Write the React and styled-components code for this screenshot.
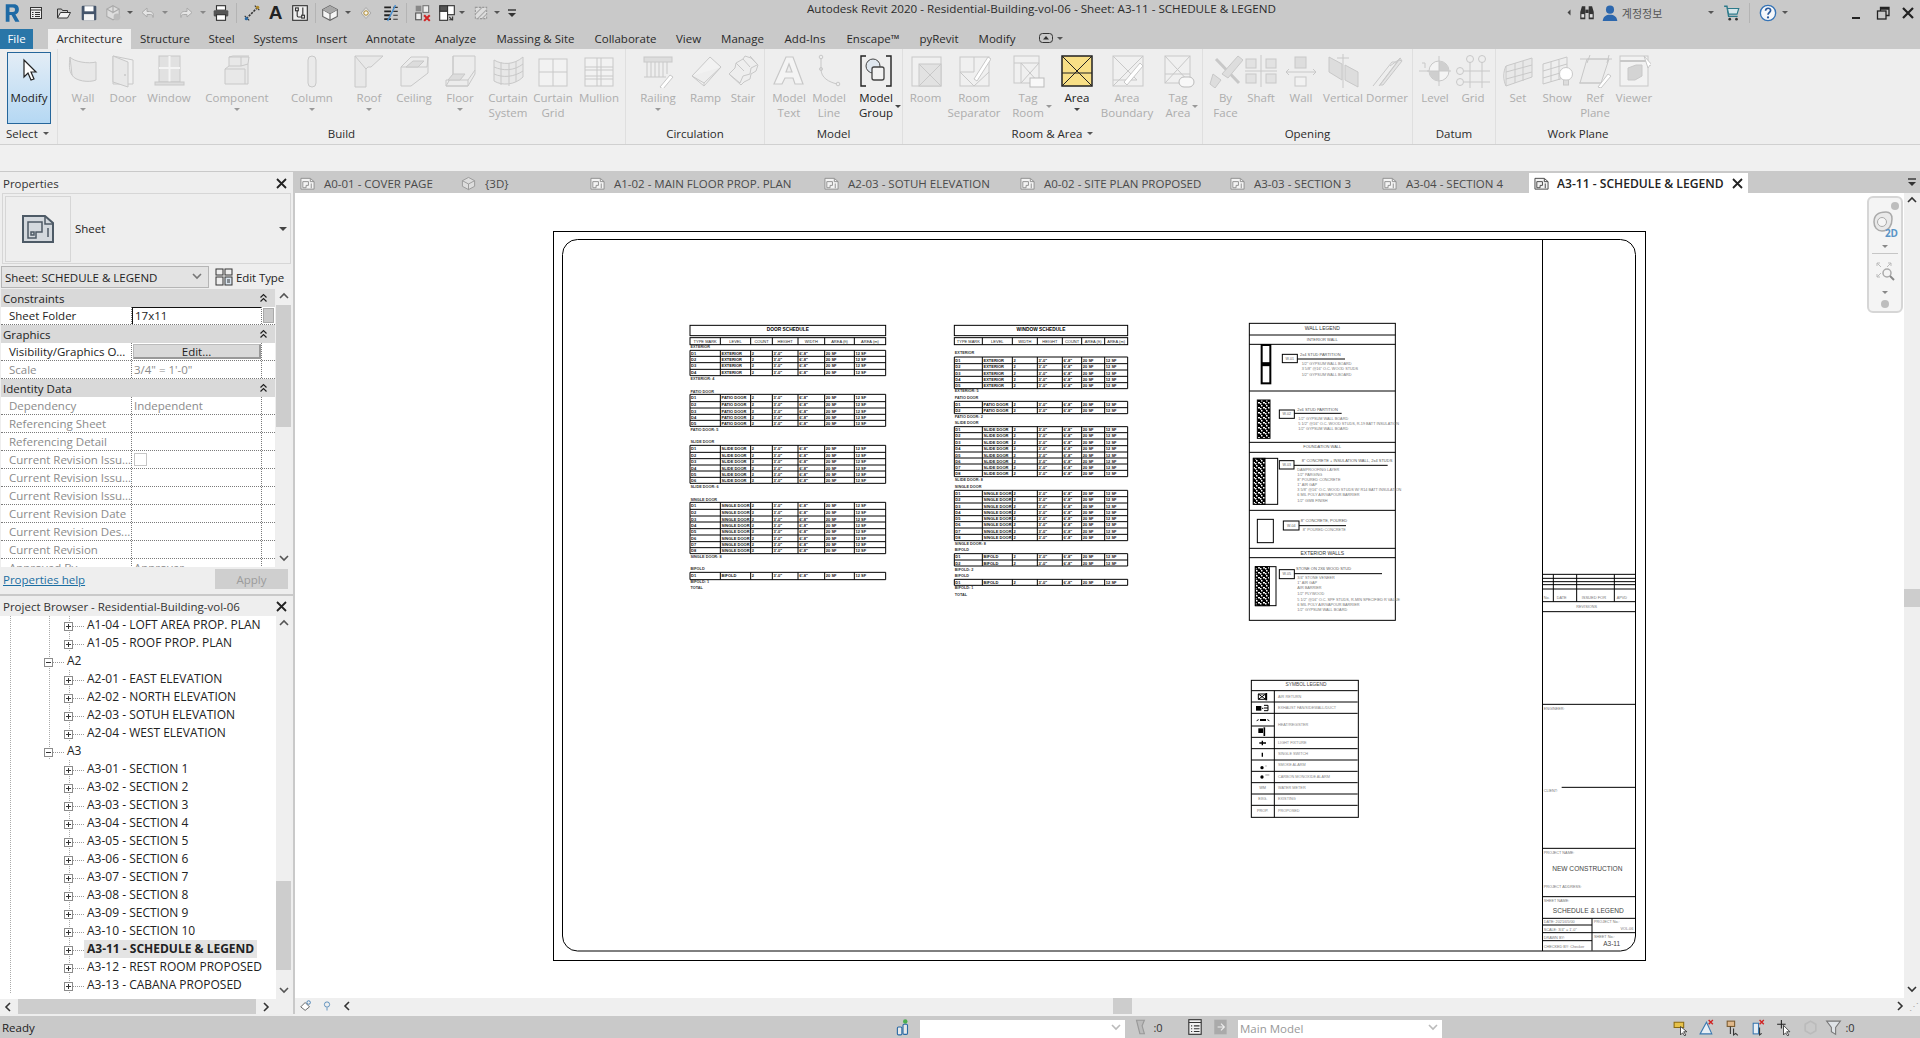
import React from 'react';
import styled, { createGlobalStyle } from 'styled-components';

const UI = `"Open Sans", "Noto Sans", "Liberation Sans", sans-serif`;
const G = '#c8c8c8';
const F = '#e8e8e8';

const Global = createGlobalStyle`
  html, body { margin: 0; padding: 0; background: #c9c9c9; overflow: hidden; }
  body { font-family: ${UI}; font-size: 11.5px; color: #222; }
  * { box-sizing: border-box; }
`;

const Page = styled.div`
  width: 1920px; height: 1038px; display: flex; flex-direction: column; background: #c9c9c9; overflow: hidden;
`;

/* ---------- generic small parts ---------- */
const Slot = styled.span`
  flex: none; width: ${p => p.$w}px; margin-left: ${p => p.$ml}px; display: flex; align-items: center; justify-content: center;
`;
const Flow = styled.div`
  display: flex; align-items: center; height: 100%;
`;
const flow = (items, start = 0) => {
  let prev = start;
  return items.map(it => {
    const w = it.w || 18;
    const ml = it.c - w / 2 - prev;
    prev = it.c + w / 2;
    return { ...it, w, ml };
  });
};
const Placed = ({ items, start }) => (
  <Flow>
    {flow(items, start).map((it, i) => <Slot key={i} $w={it.w} $ml={it.ml}>{it.n}</Slot>)}
  </Flow>
);
const Caret = styled.i`
  display: inline-block; width: 0; height: 0; border-left: 3px solid transparent; border-right: 3px solid transparent;
  border-top: 3px solid ${p => p.$c || '#555'}; flex: none;
`;
const LeftCaret = styled(Caret)`transform: rotate(90deg);`;
const BigCaret = styled(Caret)`border-width: 4px 4px 0;`;

const S = ({ s = 16, v = 16, children }) => (
  <svg width={s} height={s} viewBox={`0 0 ${v} ${v}`} fill="none">{children}</svg>
);

/* ---------- quick access icons ---------- */
const qa = {
  R: <S s={20}><path d="M3 1h6.500c3 0 4 2 4 4.200 0 2-1 3.400-2.800 4L14 15h-3.400L7.600 9.600H6V15H3z" fill="#1f6aa5" /><path d="M6 3.600v3.600h2.600c1.200 0 1.800-.7 1.800-1.800s-.6-1.800-1.800-1.800z" fill="#c9c9c9" /></S>,
  sheet: <S><rect x="2.500" y="2.500" width="11" height="11" fill="#eee" stroke="#333" /><path d="M2.500 5h11M7 7.500h5M7 9.500h5M7 11.500h5M4 7.500h1.500M4 9.500h1.500M4 11.500h1.500" stroke="#333" /></S>,
  open: <S><path d="M1.500 13V4h4l1 1.500h5V8" stroke="#333" /><path d="M1.500 13l3-5.500h10L11.500 13z" fill="#f2f2f2" stroke="#333" /></S>,
  save: <S s={18}><rect x="1.500" y="1.500" width="13" height="13" rx="1" fill="#44546a" /><rect x="4" y="2" width="8" height="4.500" fill="#fff" /><rect x="3.500" y="9" width="9" height="5.500" fill="#f2f2f2" /></S>,
  sync: <S s={18}><path d="M8 1.500l5.500 3v6.500L8 14l-5.500-3V4.500z" fill="#ddd" stroke="#aaa" /><circle cx="11.500" cy="11.500" r="3" fill="#bbb" /><path d="M8 1.500v6l5.500-3M8 7.500l-5.500-3" stroke="#aaa" /></S>,
  undo: <S><path d="M7 3L2 7.500l5 4.500V9.500h3.500c1.500 0 2.500 1 2.500 3 1-3 0-6-3.500-6H7z" fill="#e4e4e4" stroke="#aaa" /></S>,
  redo: <S><path d="M9 3l5 4.500-5 4.500V9.500H5.500c-1.500 0-2.500 1-2.500 3-1-3 0-6 3.500-6H9z" fill="#e4e4e4" stroke="#aaa" /></S>,
  print: <S s={18}><rect x="4" y="1.500" width="8" height="4" fill="#fff" stroke="#333" /><rect x="1.500" y="5.500" width="13" height="5.500" rx="1" fill="#555" /><rect x="4" y="9.500" width="8" height="5" fill="#fff" stroke="#333" /></S>,
  measure: <S s={18}><path d="M3 13L13 3" stroke="#333" strokeWidth="1.400" strokeDasharray="2 1" /><path d="M1.500 10.500l4 4M10.500 1.500l4 4" stroke="#333" /><circle cx="13" cy="3" r="1.500" fill="#b08a2a" /><circle cx="3" cy="13" r="1.500" fill="#2a6aa5" /></S>,
  tag: <S s={18}><rect x="1.500" y="1.500" width="13" height="13" fill="#eee" stroke="#333" /><rect x="4" y="3.500" width="2.500" height="2.500" stroke="#333" /><rect x="9.500" y="10" width="2.500" height="2.500" stroke="#333" /><path d="M5.500 6v4.500c0 1 .5 1 1 1h3M10.500 3v7" stroke="#333" /></S>,
  cube: <S s={18}><path d="M8 1.500L14.500 5v6L8 14.500 1.500 11V5z" fill="#f5f5f5" stroke="#666" /><path d="M1.500 5L8 8.500 14.500 5M8 8.500v6" stroke="#666" /><path d="M1.500 5L8 1.500 14.500 5 8 8.500z" fill="#a8a8a8" /></S>,
  section: <S><path d="M8 2.500L13 8l-5 5.500L3 8z" fill="#ddd" stroke="#aaa" /><circle cx="8" cy="8" r="2.200" fill="#f5f5f5" stroke="#b08a2a" /></S>,
  thin: <S s={18}><path d="M2 3h6M2 6.500h6M2 10h6M2 13.500h6" stroke="#222" strokeWidth="1.600" /><path d="M10 3h4M10 6.500h4M10 10h4M10 13.500h4" stroke="#333" /><path d="M12 1L5 15" stroke="#4a90d0" strokeWidth="1.200" /></S>,
  closeV: <S s={18}><rect x="1.500" y="1.500" width="5" height="5" fill="#888" /><rect x="1.500" y="8" width="5" height="6" fill="#eee" stroke="#555" /><rect x="8" y="1.500" width="5" height="6" fill="#eee" stroke="#777" /><path d="M9 10l5 5M14 10l-5 5" stroke="#d02424" strokeWidth="1.800" /></S>,
  swV: <S s={18}><rect x="1.500" y="1.500" width="7" height="5" fill="#555" stroke="#333" /><rect x="1.500" y="6.500" width="7" height="8" fill="#fff" stroke="#333" /><rect x="8.500" y="1.500" width="6" height="8" fill="#fff" stroke="#333" /><path d="M10 11.500l3 3M13 11v3h-3" stroke="#333" /></S>,
  hatch: <S s={18}><rect x="3" y="3" width="10" height="10" fill="#ddd" stroke="#999" strokeDasharray="2 1" /><path d="M3 9l6-6M5 13l8-8M9 13l4-4" stroke="#aaa" /></S>,
  menu: <S s={10} v={10}><path d="M1 2h8" stroke="#333" strokeWidth="1.400" /><path d="M1 5h8L5 9z" fill="#333" /></S>,
  bino: <S s={18}><path d="M2 13.500V7l1.500-5h3v11.500zM14 13.500V7l-1.500-5h-3v11.500z" fill="#333" /><rect x="6.500" y="5" width="3" height="3" fill="#333" /><rect x="3" y="9" width="2.500" height="3" fill="#ddd" /><rect x="10.500" y="9" width="2.500" height="3" fill="#ddd" /></S>,
  user: <S s={18}><circle cx="8" cy="5" r="3.600" fill="#2c67ad" /><path d="M1.500 15c.5-4 3-5.500 6.500-5.500s6 1.500 6.500 5.500z" fill="#2c67ad" /></S>,
  cart: <S s={18}><path d="M1 2h2.500l1.500 9h8" stroke="#2c7a8a" strokeWidth="1.300" /><path d="M4 4h10l-1.500 5H5z" fill="#d6e6ea" stroke="#2c7a8a" /><circle cx="6" cy="13.500" r="1.200" fill="#333" /><circle cx="12" cy="13.500" r="1.200" fill="#333" /></S>,
  help: <S s={18}><circle cx="8" cy="8" r="6.800" fill="#f5f7fa" stroke="#3573b5" strokeWidth="1.200" /><path d="M5.800 6c.2-1.500 1.200-2.200 2.300-2.200 1.300 0 2.200.8 2.200 2 0 1.700-2.300 1.800-2.300 3.700" stroke="#2a5a9c" strokeWidth="1.500" /><circle cx="8" cy="11.900" r="1" fill="#2a5a9c" /></S>,
  min: <S><path d="M3 13h8" stroke="#222" strokeWidth="2" /></S>,
  rest: <S><rect x="2.500" y="6" width="8.500" height="8" stroke="#222" strokeWidth="1.300" /><path d="M5.500 6V2.500h8.500v8H11M5.500 4h8.500" stroke="#222" strokeWidth="1.300" /></S>,
  x: <S><path d="M3 3l10 10M13 3L3 13" stroke="#222" strokeWidth="2.200" /></S>,
};
const Sep = styled.i`display: block; width: 1px; height: 20px; background: #b4b4b4;`;
const BigA = styled.span`font: 700 19px "Liberation Sans", sans-serif; color: #222;`;
const Who = styled.span`font: 400 11px "Noto Sans CJK KR", sans-serif; color: #555; white-space: nowrap;`;

const qatLeft = [
  { c: 12, n: qa.R, w: 20 }, { c: 36, n: qa.sheet }, { c: 64, n: qa.open }, { c: 89, n: qa.save },
  { c: 113, n: qa.sync }, { c: 130, n: <Caret />, w: 8 }, { c: 148, n: qa.undo }, { c: 165, n: <Caret $c="#888" />, w: 8 },
  { c: 186, n: qa.redo }, { c: 203, n: <Caret $c="#888" />, w: 8 }, { c: 221, n: qa.print }, { c: 236, n: <Sep />, w: 1 },
  { c: 252, n: qa.measure }, { c: 275.5, n: <BigA>A</BigA> }, { c: 300, n: qa.tag }, { c: 315, n: <Sep />, w: 1 },
  { c: 330, n: qa.cube }, { c: 348, n: <Caret />, w: 8 }, { c: 366, n: qa.section }, { c: 391, n: qa.thin },
  { c: 406, n: <Sep />, w: 1 }, { c: 423, n: qa.closeV }, { c: 447, n: qa.swV }, { c: 462, n: <Caret />, w: 8 },
  { c: 481, n: qa.hatch }, { c: 497, n: <Caret />, w: 8 }, { c: 512, n: qa.menu, w: 10 },
];
const qatRight = [
  { c: 1568.5, n: <LeftCaret $c="#444" />, w: 8 }, { c: 1587, n: qa.bino }, { c: 1610, n: qa.user },
  { c: 1642, n: <Who>계정정보</Who>, w: 38 }, { c: 1711, n: <Caret />, w: 8 }, { c: 1732, n: qa.cart },
  { c: 1749, n: <Sep />, w: 1 }, { c: 1768, n: qa.help }, { c: 1785, n: <Caret />, w: 8 },
  { c: 1857, n: qa.min }, { c: 1883, n: qa.rest }, { c: 1908, n: qa.x },
];

/* ---------- top bar ---------- */
const TopBar = styled.header`
  flex: none; height: 49px; background: #c9c9c9; display: flex; flex-direction: column;
`;
const TitleRow = styled.div`
  height: 29px; display: grid; grid-template-columns: 807px 753px 360px; align-items: center; padding-bottom: 4px;
`;
const Title = styled.div`
  font-size: 11.650px; line-height: 16px; color: #2b2b2b; white-space: nowrap; align-self: start; margin-top: 1px;
`;
const TabsRow = styled.nav`
  height: 20px; display: flex; align-items: stretch;
`;
const FileTab = styled.div`
  width: 33px; background: #2a76a8; color: #fff; display: flex; align-items: center; justify-content: center; margin-right: 15px; padding-bottom: 2px;
`;
const RibbonTab = styled.div`
  display: flex; align-items: center; justify-content: center; flex: none; white-space: nowrap; width: ${p => p.$w}px; padding-bottom: 2px;
  background: ${p => p.$on ? '#efefef' : 'transparent'}; color: #2a2a2a;
`;
const RibbonMenuCaret = styled(Caret)`margin-left: 4px;`;

/* ---------- ribbon ---------- */
const Ribbon = styled.section`
  flex: none; height: 96px; background: #eeeeee; border-bottom: 1px solid #d0d0d0; display: flex;
`;
const Panel = styled.div`
  flex: none; width: ${p => p.$w}px; border-right: 1px solid ${p => p.$last ? 'transparent' : '#dfdfdf'}; display: flex; flex-direction: column;
`;
const Tools = styled.div`
  height: 76px; display: flex; padding-left: ${p => p.$pad || 0}px;
`;
const PanelLabel = styled.div`
  height: 16px; display: flex; gap: 5px; align-items: center; justify-content: ${p => p.$left ? 'flex-start' : 'center'};
  padding-left: ${p => p.$left ? 6 : 0}px; color: #2b2b2b;
`;
const Tool = styled.div`
  flex: none; width: ${p => p.$w}px; display: flex; flex-direction: column; align-items: center; padding-top: 5px;
  color: ${p => p.$on ? '#222' : '#adadad'}; position: relative;
`;
const ToolIcon = styled.div`height: 34px; display: flex; align-items: center; justify-content: center;`;
const ToolLabel = styled.div`
  margin-top: 2px; line-height: 15px; text-align: center; display: flex; flex-direction: column; align-items: center; white-space: nowrap;
`;
const ModifyLabel = styled(ToolLabel)`margin-top: 3px;`;
const ToolCaret = styled.div`margin-top: 3px; height: 6px; display: flex; justify-content: center;`;
const SideCaret = styled.span`position: absolute; display: flex; right: ${p => p.$r}px; top: 56px;`;
const ModifyBtn = styled.div`
  margin: 3px 0 0 7px; width: 44px; height: 72px; border: 1px solid #25669b; display: flex; flex-direction: column; align-items: center;
  background: linear-gradient(#e3edf6, #b5d8f3); color: #222;
`;

const ic = (kids, v = 34) => <svg width="34" height="34" viewBox={`0 0 ${v} ${v}`} fill="none">{kids}</svg>;
const ti = {
  wall: ic(<><path d="M4 3c4 5 19 7 26 5v18c-7 3-21 1-24-5z" fill={F} stroke={G} /><path d="M4 3c-1 8-1 14 2 18" stroke={G} /></>),
  door: ic(<><path d="M7 2l20 4v24H7z" fill="#f0f0f0" stroke={G} /><path d="M7 2l15 6v25L7 28z" fill={F} stroke={G} /><circle cx="19" cy="21" r="1" fill={G} /></>),
  window: ic(<><rect x="7" y="2" width="21" height="26" fill="#e1e1e1" stroke={G} /><path d="M17.500 2v26M7 14h21" stroke="#f4f4f4" strokeWidth="2" /><rect x="3" y="28" width="29" height="3" fill="#ddd" stroke={G} /></>),
  comp: ic(<><path d="M5 15l4-3V3h20l-1 7v20H5z" fill={F} stroke={G} /><path d="M9 3l4-1h16M9 12h12V3M21 12l7-2M5 15h20v15" stroke={G} /></>),
  column: ic(<rect x="13" y="2" width="8" height="31" rx="4" fill="#eaeaea" stroke={G} />),
  roof: ic(<path d="M3 2h28L19 13h-3L14 15v18H3zM3 2l11 13" fill={F} stroke={G} />),
  ceiling: ic(<><path d="M4 13L14 3h17v16L14 32H4z" fill="#ececec" stroke={G} /><path d="M4 13h26l1-10M14 3L4 13" stroke={G} /><path d="M9 13l7-6h11l-6 6z" fill="#dcdcdc" stroke={G} /></>),
  floor: ic(<><path d="M10 2h22v18l-7 12H3l7-12z" fill="#ececec" stroke={G} /><path d="M3 26h22v6H3zM25 26l7-10M10 20V2" stroke={G} /><path d="M10 20h12l-5 6H5z" fill="#dcdcdc" stroke={G} /></>),
  csys: ic(<><path d="M3 6c8 5 20 5 29-3v20c-8 8-21 9-29 4z" fill={F} stroke={G} /><path d="M3 13c9 4 20 4 29-3M3 20c9 4 20 3 29-3M10 8v23M18 9v23M25 7v21" stroke={G} /></>),
  cgrid: ic(<><rect x="3" y="5" width="28" height="27" fill="#f2f2f2" stroke={G} /><path d="M3 18h28M17 5v27" stroke={G} /></>),
  mullion: ic(<><rect x="3" y="4" width="28" height="28" fill="#f2f2f2" stroke={G} /><path d="M15 4v28M19 4v28M3 13h28M3 16h28M3 25h28M3 22h28" stroke={G} /></>),
  railing: ic(<><rect x="3" y="3" width="28" height="5" fill="#ddd" stroke={G} /><path d="M6 8v15M10 8v15M14 8v15M18 8v15M22 8v15M26 8v12M3 23h22" stroke={G} /><path d="M19 33l10-12 3 2-10 12z" fill="#fff" stroke={G} /></>),
  ramp: ic(<path d="M3 22L21 3l11 10-17 19zM3 22l12 7 17-16M15 29v3" fill="#f2f2f2" stroke={G} />),
  stair: ic(<path d="M3 20l6-6 1-5 7-4 2-3 6 2 7 7-2 6-5 3-1 5-6 3-3 3-12-11zM10 9l8 8M17 5l7 8M24 2l7 8M3 20l11 9 3-7 7-2 1-6 6-3" fill="#eee" stroke={G} />),
  mtext: ic(<path d="M2 30L14 3h7l10 27h-8l-2-6h-8l-3 6zM14 18h6l-3-8z" fill="#f4f4f4" stroke={G} strokeWidth="1.200" />),
  mline: ic(<><path d="M9 4v11c0 9 8 13 16 15" stroke={G} /><circle cx="9" cy="3" r="1.800" stroke={G} /><circle cx="26" cy="30" r="1.800" stroke={G} /><circle cx="9" cy="15" r="1.500" stroke={G} /></>),
  mgroup: ic(<><path d="M7 2H2v30h5M27 2h5v30h-5" stroke="#222" strokeWidth="1.400" /><circle cx="14" cy="12" r="7" fill="#dfe7ef" stroke="#444" /><rect x="13" y="13" width="12" height="13" rx="2" fill="#f2f2f2" stroke="#444" strokeWidth="1.300" /></>),
  room: ic(<><rect x="3" y="3" width="29" height="29" fill="#f0f0f0" stroke={G} /><rect x="10" y="10" width="22" height="22" fill="#e2e2e2" stroke={G} /><path d="M10 10l22 22M32 10L10 32" stroke={G} /></>),
  rsep: ic(<><rect x="3" y="3" width="29" height="29" fill="#f0f0f0" stroke={G} /><path d="M3 18h14V3M3 18l14 14M17 32l15-14" stroke={G} /><path d="M17 25L31 3l3 2-14 22z" fill="#fff" stroke={G} /></>),
  troom: ic(<><rect x="3" y="2" width="25" height="27" fill="#f0f0f0" stroke={G} /><path d="M10 9v20M3 9h25M10 9l18 20M28 9L10 29" stroke={G} /><rect x="19" y="24" width="14" height="9" fill="#f8f8f8" stroke="#bbb" /></>),
  area: ic(<><rect x="2" y="2" width="30" height="30" fill="#f8df86" stroke="#222" strokeWidth="1.500" /><path d="M2 2l30 30M32 2L2 32M2 19h30" stroke="#222" /></>),
  aboundary: ic(<><rect x="3" y="2" width="30" height="30" fill="#f0f0f0" stroke={G} /><path d="M3 2l24 24M33 2L3 32M3 26h24" stroke={G} /><path d="M14 28L30 9l3 3-16 19z" fill="#fff" stroke={G} /></>),
  tarea: ic(<><rect x="4" y="2" width="25" height="27" fill="#f0f0f0" stroke={G} /><path d="M4 2l25 27M29 2L4 29M4 20h25" stroke={G} /><rect x="18" y="23" width="15" height="10" rx="5" fill="#f8f8f8" stroke="#bbb" /></>),
  byface: ic(<><path d="M4 20l8 6-6 8-5-4z" fill="#ddd" stroke={G} /><path d="M7 5L30 29" stroke={G} strokeWidth="3" /><path d="M29 2l5 4-15 18-6-4z" fill="#ddd" stroke={G} /></>),
  shaft: ic(<><path d="M17 1v32M1 17h32" stroke={G} /><rect x="2" y="5" width="10" height="9" fill="#e2e2e2" stroke={G} /><rect x="22" y="5" width="10" height="9" fill="#e2e2e2" stroke={G} /><rect x="2" y="20" width="10" height="9" fill="#e2e2e2" stroke={G} /><rect x="22" y="20" width="10" height="9" fill="#e2e2e2" stroke={G} /></>),
  owall: ic(<><rect x="11" y="3" width="11" height="11" fill="#ddd" stroke={G} /><path d="M2 18h30M5 15l-3 3 3 3M29 15l3 3-3 3" stroke={G} /><rect x="11" y="23" width="11" height="9" fill="#f2f2f2" stroke={G} /></>),
  vert: ic(<><path d="M3 3l13 7v16L3 18zM19 11l13 7v15l-13-7z" fill="#ddd" stroke={G} /><path d="M17 0v34M11 4h12" stroke={G} /></>),
  dormer: ic(<><path d="M3 32L22 8h9M9 32L30 4l2 3M20 12L31 4" stroke={G} /><path d="M10 31L29 6l3 1-19 24z" fill="#e4e4e4" stroke={G} /></>),
  level: ic(<><path d="M1 17h10M4 9h3v5" stroke={G} /><circle cx="21" cy="17" r="10" fill="#f4f4f4" stroke={G} /><path d="M21 7a10 10 0 0 1 10 10H21zM21 27a10 10 0 0 1-10-10h10z" fill="#cfcfcf" /><path d="M9 17h24M21 2v30" stroke={G} /></>),
  grid: ic(<><path d="M14 8v26M26 8v26M8 17h26M8 28h26" stroke={G} /><circle cx="14" cy="5" r="3.500" stroke={G} /><circle cx="26" cy="5" r="3.500" stroke={G} /><circle cx="4" cy="17" r="3.500" stroke={G} /><circle cx="4" cy="28" r="3.500" stroke={G} /></>),
  set: ic(<><path d="M5 12l26-8v19L5 32z" fill={F} stroke={G} /><path d="M5 12c-3 6-3 14 0 20M14 9v20M22 7v20M5 18l26-7M5 25l26-7" stroke={G} /></>),
  show: ic(<><path d="M3 10l24-7v20l-24 7z" fill="#eee" stroke={G} /><path d="M11 8v20M19 6v20M3 17l24-7M3 24l24-7" stroke={G} /><circle cx="26" cy="20" r="6.500" fill="#fff" stroke={G} /><rect x="23.500" y="26" width="5" height="5" fill="#ddd" stroke={G} /></>),
  ref: ic(<><path d="M9 5h22l-8 24H2z" fill="#ececec" stroke={G} /><path d="M2 5h32M1 29h26M12 1l-3 8M31 1l-2 8" stroke={G} /><path d="M20 33l10-13 3 2-10 12z" fill="#fff" stroke={G} /></>),
  viewer: ic(<><rect x="3" y="2" width="28" height="30" fill="#f2f2f2" stroke={G} /><path d="M3 7h28" stroke={G} strokeWidth="2" /><path d="M11 14l8-3h6v11l-7 4h-7z" fill="#d4d4d4" stroke={G} /><path d="M27 2l4 12 2-3 3 1z" fill="#fff" stroke={G} /></>),
};
const cursorIcon = ic(<path d="M12 7v17l4-4 3 7 3-1-3-7h5z" fill="#fff" stroke="#222" strokeWidth="1.200" />);

const panels = [
  { w: 568, name: 'Build', pad: 5, tools: [
    ['Wall', 40, ti.wall, 1], ['Door', 40, ti.door], ['Window', 52, ti.window], ['Component', 84, ti.comp, 1], ['Column', 66, ti.column, 1],
    ['Roof', 48, ti.roof, 1], ['Ceiling', 42, ti.ceiling], ['Floor', 50, ti.floor, 1], ['Curtain|System', 46, ti.csys], ['Curtain|Grid', 44, ti.cgrid], ['Mullion', 48, ti.mullion],
  ] },
  { w: 139, name: 'Circulation', pad: 7, tools: [['Railing', 50, ti.railing, 1], ['Ramp', 45, ti.ramp], ['Stair', 30, ti.stair]] },
  { w: 138, name: 'Model', pad: 4, tools: [['Model|Text', 40, ti.mtext], ['Model|Line', 40, ti.mline], ['Model|Group', 54, ti.mgroup, 0, true, 2]] },
  { w: 300, name: 'Room & Area', caret: true, pad: 2, tools: [
    ['Room', 41, ti.room], ['Room|Separator', 56, ti.rsep], ['Tag|Room', 52, ti.troom, 0, false, 2], ['Area', 46, ti.area, 1, true],
    ['Area|Boundary', 54, ti.aboundary], ['Tag|Area', 48, ti.tarea, 0, false, 4],
  ] },
  { w: 210, name: 'Opening', pad: 4, tools: [['By|Face', 37, ti.byface], ['Shaft', 34, ti.shaft], ['Wall', 46, ti.owall], ['Vertical', 38, ti.vert], ['Dormer', 50, ti.dormer]] },
  { w: 83, name: 'Datum', pad: 2, tools: [['Level', 40, ti.level], ['Grid', 36, ti.grid]] },
  { w: 165, name: 'Work Plane', pad: 2, last: true, tools: [['Set', 40, ti.set], ['Show', 38, ti.show], ['Ref|Plane', 38, ti.ref], ['Viewer', 40, ti.viewer]] },
];

const RibbonBar = () => (
  <Ribbon>
    <Panel $w={58}>
      <Tools>
        <ModifyBtn>
          <ToolIcon>{cursorIcon}</ToolIcon>
          <ModifyLabel>Modify</ModifyLabel>
        </ModifyBtn>
      </Tools>
      <PanelLabel $left>Select <Caret /></PanelLabel>
    </Panel>
    {panels.map(p => (
      <Panel key={p.name} $w={p.w} $last={p.last}>
        <Tools $pad={p.pad}>
          {p.tools.map(([label, w, icon, caret, on, side]) => (
            <Tool key={label} $w={w} $on={on}>
              <ToolIcon>{icon}</ToolIcon>
              <ToolLabel>{label.split('|').map(l => <span key={l}>{l}</span>)}</ToolLabel>
              {caret ? <ToolCaret><Caret $c={on ? '#444' : '#999'} /></ToolCaret> : null}
              {side ? <SideCaret $r={side}><Caret $c={on ? '#444' : '#999'} /></SideCaret> : null}
            </Tool>
          ))}
        </Tools>
        <PanelLabel>{p.name}{p.caret ? <Caret /> : null}</PanelLabel>
      </Panel>
    ))}
  </Ribbon>
);

const OptionsBar = styled.div`flex: none; height: 26px; background: #f0f0f0;`;

/* ---------- main area ---------- */
const Main = styled.main`flex: 1; min-height: 0; display: flex; padding-bottom: 2px; background: #f0f0f0;`;
const Left = styled.aside`
  flex: none; width: 295px; background: #c9c9c9; display: flex; flex-direction: column; gap: 2px; padding: 1px 2px 0 0;
`;
const Dock = styled.section`
  background: #eeeeee; display: flex; flex-direction: column; height: ${p => p.$h}px; flex: none;
`;
const DockHead = styled.div`
  flex: none; height: ${p => p.$h}px; padding: ${p => p.$top || 0}px 6px 0 3px; display: flex; align-items: center; justify-content: space-between; color: #333; white-space: nowrap;
`;
const CloseX = () => <svg width="11" height="11" viewBox="0 0 11 11"><path d="M1 1l9 9M10 1l-9 9" stroke="#222" strokeWidth="1.800" /></svg>;

const TypeBox = styled.div`
  flex: none; height: 71px; margin: 0 2px 0 2px; border: 1px solid #d6d6d6; display: flex; align-items: center; padding-right: 3px;
`;
const TypeThumb = styled.div`
  width: 66px; height: 66px; margin-left: 2px; border: 1px solid #d6d6d6; display: flex; align-items: center; justify-content: center;
`;
const TypeName = styled.div`flex: 1; padding-left: 4px;`;
const SelectRow = styled.div`
  flex: none; height: 25px; display: flex; align-items: center; padding: 1px 0 0 1px;
`;
const Select = styled.div`
  width: 208px; height: 22px; background: #e3e3e3; border: 1px solid #b5b5b5; display: flex; align-items: center; justify-content: space-between;
  padding: 0 6px 0 3px; white-space: nowrap;
`;
const EditType = styled.div`display: flex; align-items: center; gap: 3px; margin-left: 6px; white-space: nowrap; letter-spacing: -.1px;`;
const PropsBody = styled.div`flex: none; height: 278px; display: flex; overflow: hidden;`;
const PropTable = styled.div`flex: none; width: 274px; margin-left: 1px; height: 100%; overflow: hidden; background: #fff;`;
const GroupRow = styled.div`
  height: 18px; background: #d9d9d9; display: flex; align-items: center; justify-content: space-between; padding: 0 7px 0 2px; color: #222;
`;
const DoubleUp = () => <svg width="9" height="10" viewBox="0 0 9 10" fill="none"><path d="M1.500 4.500l3-3 3 3M1.500 8.500l3-3 3 3" stroke="#222" strokeWidth="1.200" /></svg>;
const PropRow = styled.div`
  height: 18px; display: grid; grid-template-columns: 131px 130px 1fr; border-bottom: 1px dotted #7a7a7a; background: #fff;
  color: ${p => p.$dim ? '#8b8b8b' : '#222'};
`;
const PropKey = styled.div`
  padding-left: 8px; border-right: 1px dotted #7a7a7a; white-space: nowrap; overflow: hidden; line-height: 17px;
`;
const PropVal = styled.div`
  border-right: 1px dotted #7a7a7a; padding-left: 2px; white-space: nowrap; line-height: 17px; overflow: hidden;
`;
const ValueInput = styled.div`
  width: 130px; height: 18px; margin-left: -2px; border: 1px solid #111; border-right-width: 1.500px; background: #fff; color: #222; padding-left: 2px; line-height: 16px; white-space: nowrap;
`;
const EditBtn = styled.div`
  margin: 1px 0 0 -1px; height: 15px; width: 128px; background: #d9d9d9; border: 1px solid #bbb; border-bottom: 2px solid #999; border-right: 2px solid #999;
  text-align: center; line-height: 13px; color: #222;
`;
const Check = styled.i`display: block; width: 13px; height: 13px; border: 1px solid #c6c6c6; margin-top: 2px;`;
const Gutter = styled.div`margin: 1px; background: #c9c9c9; border: 1px solid #aaa;`;
const VBar = styled.div`
  flex: none; width: ${p => p.$w || 15}px; margin-left: ${p => p.$ml ?? 1}px; display: flex; flex-direction: column; align-items: center; background: ${p => p.$bg || '#efefef'};
`;
const ArrowBtn = styled.div`flex: none; height: 16px; display: flex; align-items: center; justify-content: center; width: 100%;`;
const Track = styled.div`flex: 1; width: 100%; padding-top: ${p => p.$top}px;`;
const Thumb = styled.div`width: 100%; height: ${p => p.$h}px; background: #cdcdcd;`;
const Chev = ({ d = 'up', c = '#555' }) => {
  const paths = { up: 'M1 6l4-4 4 4', down: 'M1 2l4 4 4-4', left: 'M6 1L2 5l4 4', right: 'M3 1l4 4-4 4' };
  return <svg width="10" height="10" viewBox="0 0 10 10" fill="none"><path d={paths[d]} stroke={c} strokeWidth="1.600" /></svg>;
};
const HelpRow = styled.div`
  flex: 1; display: flex; align-items: center; justify-content: space-between; padding: 0 5px 3px 3px;
`;
const HelpLink = styled.a`color: #1b6ea3; text-decoration: underline;`;
const ApplyBtn = styled.div`
  width: 73px; height: 20px; background: #cfcfcf; color: #9b9b9b; display: flex; align-items: center; justify-content: center;
`;

const propRows = [
  { g: 'Constraints' },
  { k: 'Sheet Folder', input: '17x11' },
  { g: 'Graphics' },
  { k: 'Visibility/Graphics O...', edit: true },
  { k: 'Scale', v: `3/4" = 1'-0"`, dim: true },
  { g: 'Identity Data' },
  { k: 'Dependency', v: 'Independent', dim: true },
  { k: 'Referencing Sheet', dim: true },
  { k: 'Referencing Detail', dim: true },
  { k: 'Current Revision Issu...', dim: true, check: true },
  { k: 'Current Revision Issu...', dim: true },
  { k: 'Current Revision Issu...', dim: true },
  { k: 'Current Revision Date', dim: true },
  { k: 'Current Revision Des...', dim: true },
  { k: 'Current Revision', dim: true },
  { k: 'Approved By', v: 'Approver', dim: true },
];

const SheetGlyph = ({ s = 15, c = '#8e8e8e', w = 1 }) => (
  <svg width={s} height={s} viewBox="0 0 16 16" fill="none">
    <path d="M1 2.500h10l4 3.500v8H1z" fill="#f3f3f3" stroke={c} strokeWidth={w} />
    <path d="M3 6h6v4H6.500v2.500H3zM11 3v3h4M12 8v5" stroke={c} strokeWidth={w} />
  </svg>
);

const Properties = () => (
  <Dock $h={422}>
    <DockHead $h={21} $top={1}>Properties<CloseX /></DockHead>
    <TypeBox>
      <TypeThumb>
        <svg width="34" height="30" viewBox="0 0 34 30" fill="none">
          <path d="M2 2h22l8 7v19H2z" fill="#d4d9de" stroke="#4d5a66" strokeWidth="2" />
          <path d="M7 8h14v10h-6v6H7zM24 3v7h8M27 14v9M10 18h3v3h-3z" stroke="#4d5a66" strokeWidth="1.500" />
        </svg>
      </TypeThumb>
      <TypeName>Sheet</TypeName>
      <BigCaret $c="#444" />
    </TypeBox>
    <SelectRow>
      <Select>Sheet: SCHEDULE &amp; LEGEND<Chev d="down" c="#777" /></Select>
      <EditType>
        <svg width="18" height="18" viewBox="0 0 18 18" fill="none">
          <rect x="1" y="1" width="7" height="6" stroke="#333" /><rect x="1" y="9" width="7" height="8" stroke="#333" />
          <rect x="10" y="1" width="7" height="6" stroke="#333" /><rect x="10" y="9" width="7" height="8" fill="#d9e4ee" stroke="#333" />
          <path d="M12 12h3M12 14h3" stroke="#333" />
        </svg>
        Edit Type
      </EditType>
    </SelectRow>
    <PropsBody>
      <PropTable>
        {propRows.map((r, i) => r.g ? (
          <GroupRow key={i}>{r.g}<DoubleUp /></GroupRow>
        ) : (
          <PropRow key={i} $dim={r.dim}>
            <PropKey>{r.k}</PropKey>
            <PropVal>
              {r.input ? <ValueInput>{r.input}</ValueInput> : null}
              {r.edit ? <EditBtn>Edit...</EditBtn> : null}
              {r.check ? <Check /> : null}
              {r.v}
            </PropVal>
            {r.input ? <Gutter /> : <span />}
          </PropRow>
        ))}
      </PropTable>
      <VBar>
        <ArrowBtn><Chev /></ArrowBtn>
        <Track $top={0}><Thumb $h={122} /></Track>
        <ArrowBtn><Chev d="down" /></ArrowBtn>
      </VBar>
    </PropsBody>
    <HelpRow>
      <HelpLink>Properties help</HelpLink>
      <ApplyBtn>Apply</ApplyBtn>
    </HelpRow>
  </Dock>
);

/* ---------- project browser ---------- */
const TreeWrap = styled.div`flex: none; height: 383px; display: flex;`;
const Tree = styled.div`flex: none; width: 276px; background: #fff; overflow: hidden; font-size: 12px;`;
const dotted = x => `linear-gradient(#aaa 50%, transparent 50%) ${x}px 0 / 1px 2px repeat-y`;
const Row = styled.div`
  height: 18px; display: flex; align-items: center; padding-left: ${p => p.$x}px; white-space: nowrap;
  background: ${p => p.$guides.map(dotted).join(',')};
`;
const Expander = styled.span`
  flex: none; width: 9px; height: 9px; border: 1px solid #8c8c8c; background: #fff; position: relative; margin-top: 2px;
  &::before { content: ''; position: absolute; left: 1px; right: 1px; top: 3px; height: 1px; background: #333; }
  &::after { content: ${p => p.$plus ? '""' : 'none'}; position: absolute; top: 1px; bottom: 1px; left: 3px; width: 1px; background: #333; }
`;
const Leader = styled.span`flex: none; width: ${p => p.$w}px; border-top: 1px dotted #999; margin-top: 2px;`;
const RowText = styled.span`
  padding: 0 3px; line-height: 18px; background: ${p => p.$on ? '#e4e4e4' : '#fff'}; font-weight: ${p => p.$on ? 700 : 400}; color: #222;
`;
const HBar = styled.div`
  flex: none; height: 15px; display: flex; align-items: center; background: #efefef;
`;
const HArrow = styled.div`flex: none; width: ${p => p.$w}px; display: flex; justify-content: center;`;
const HThumb = styled.div`flex: none; width: 238px; height: 15px; background: #cdcdcd;`;

const sheetRows = [
  ['A1-04 - LOFT AREA PROP. PLAN'], ['A1-05 - ROOF PROP. PLAN'], ['A2', 1],
  ['A2-01 - EAST ELEVATION'], ['A2-02 - NORTH ELEVATION'], ['A2-03 - SOTUH ELEVATION'], ['A2-04 - WEST ELEVATION'], ['A3', 1],
  ...['1', '2', '3', '4', '5', '6', '7', '8', '9', '10'].map((n, i) => [`A3-${String(i + 1).padStart(2, '0')} - SECTION ${n}`]),
  ['A3-11 - SCHEDULE & LEGEND', 0, 1], ['A3-12 - REST ROOM PROPOSED'], ['A3-13 - CABANA PROPOSED'],
];

const Browser = () => {
  let seenA3 = false;
  return (
    <Dock $h={420}>
      <DockHead $h={20}>Project Browser - Residential-Building-vol-06<CloseX /></DockHead>
      <TreeWrap>
        <Tree>
          {sheetRows.map(([t, group, on]) => {
            const guides = [10];
            if (!seenA3) guides.push(49);
            if (t === 'A3') seenA3 = true;
            if (!group) guides.push(69);
            return group ? (
              <Row key={t} $x={44} $guides={guides}><Expander /><Leader $w={11} /><RowText>{t}</RowText></Row>
            ) : (
              <Row key={t} $x={64} $guides={guides}><Expander $plus /><Leader $w={11} /><RowText $on={on}>{t}</RowText></Row>
            );
          })}
        </Tree>
        <VBar $ml={0}>
          <ArrowBtn><Chev /></ArrowBtn>
          <Track $top={249}><Thumb $h={89} /></Track>
          <ArrowBtn><Chev d="down" /></ArrowBtn>
        </VBar>
      </TreeWrap>
      <HBar>
        <HArrow $w={18}><Chev d="left" c="#333" /></HArrow>
        <HThumb />
        <HArrow $w={20}><Chev d="right" c="#333" /></HArrow>
      </HBar>
    </Dock>
  );
};

/* ---------- view side ---------- */
const ViewSide = styled.div`flex: 1; min-width: 0; display: flex; flex-direction: column;`;
const TabStrip = styled.div`
  flex: none; height: 22px; background: #c9c9c9; display: flex; align-items: flex-end; padding-left: 1px; position: relative;
`;
const ViewTab = styled.div`
  flex: none; width: ${p => p.$w}px; height: 20px; padding-left: ${p => p.$on ? 5 : 4}px; display: flex; align-items: center; gap: ${p => p.$on ? 8 : 9}px;
  background: ${p => p.$on ? '#fff' : 'transparent'}; font-weight: ${p => p.$on ? 600 : 400}; color: ${p => p.$on ? '#222' : '#4a4a4a'}; white-space: nowrap;
  font-size: ${p => p.$on ? '12.100px' : '11.500px'};
`;
const TabClose = styled.span`margin-left: 0; display: flex;`;
const TabMenu = styled.span`margin-left: auto; margin-right: 3px; align-self: center; display: flex;`;
const CubeTab = () => (
  <svg width="15" height="15" viewBox="0 0 16 16" fill="none">
    <path d="M8 1.500L14.500 5v6L8 14.500 1.500 11V5z" fill="#ddd" stroke="#999" /><path d="M1.500 5L8 8.500 14.500 5M8 8.500v6" stroke="#999" />
  </svg>
);
const viewTabs = [
  ['A0-01 - COVER PAGE', 161], ['{3D}', 129, 'cube'], ['A1-02 - MAIN FLOOR PROP. PLAN', 234], ['A2-03 - SOTUH ELEVATION', 196],
  ['A0-02 - SITE PLAN PROPOSED', 210], ['A3-03 - SECTION 3', 152], ['A3-04 - SECTION 4', 151],
];
const CanvasRow = styled.div`flex: 1; min-height: 0; display: flex;`;
const Canvas = styled.div`flex: 1; min-width: 0; background: #fff; position: relative;`;
const SheetSvg = styled.svg`display: block; width: 100%; height: 100%;`;
const NavBar = styled.div`
  position: absolute; right: 1px; top: 3px; width: 36px; height: 117px; border: 2px solid #d6d6d6; border-radius: 6px; background: #f4f4f4;
  display: flex; flex-direction: column; align-items: center; padding-top: 4px;
`;
const NavDot = styled.div`
  align-self: flex-end; margin-right: 2px; width: 8px; height: 8px; border-radius: 50%; background: #bdbdbd; flex: none;
`;
const NavDotBottom = styled(NavDot)`margin: auto 0 3px; align-self: center;`;
const NavRule = styled.div`width: 26px; height: 1px; background: #c6c6c6; margin: 5px 0 6px;`;
const Nav2D = styled.span`color: #5b94c6; font-weight: 700; font-size: 10px; align-self: flex-end; margin: -8px 3px 0 0;`;
const NavCaret = styled(Caret)`margin-top: ${p => p.$mt}px;`;
const SideBar = styled.div`
  flex: none; width: 16px; background: #efefef; display: flex; flex-direction: column; align-items: center;
`;
const SideTrack = styled.div`flex: 1; width: 100%; padding-top: 380px;`;
const SideThumb = styled.div`width: 100%; height: 18px; background: #cdcdcd;`;
const BottomBar = styled.div`flex: none; height: 16px; background: #efefef; display: flex; align-items: center;`;
const BottomThumb = styled.div`height: 16px; width: 19px; background: #cdcdcd;`;

/* ---------- drawing ---------- */
const Tiny = styled.text`
  font-family: "Liberation Sans", sans-serif; font-size: ${p => p.$s}px; fill: ${p => p.$c || '#666'}; font-weight: ${p => p.$b ? 700 : 400};
`;
const Ln = ({ x1, y1, x2, y2, w = 1 }) => <line x1={x1} y1={y1} x2={x2} y2={y2} stroke="#000" strokeWidth={w} />;

const cellsA = ['DOOR', 'FRAME', '2', `3'-0"`, `6'-8"`, `20 SF`, `12 SF`];
const T1 = {
  ox: 680, oy: 315, x: [30, 121, 212, 277, 354, 434, 523, 617], title: 'DOOR SCHEDULE', t: [31, 62], h: [68, 89],
  heads: ['TYPE MARK', 'LEVEL', 'COUNT', 'HEIGHT', 'WIDTH', 'AREA (ft)', 'AREA (m)'],
  groups: [
    { h: 95, n: 'EXTERIOR', r: [106, 124, 143, 163, 182], f: 190 },
    { h: 229, n: 'PATIO DOOR', r: [238, 260, 279, 298, 316, 334], f: 343 },
    { h: 380, n: 'SLIDE DOOR', r: [391, 412, 431, 450, 468, 487, 505], f: 515 },
    { h: 553, n: 'SINGLE DOOR', r: [562, 583, 603, 621, 641, 660, 680, 698, 716], f: 724 },
    { h: 760, n: 'BIFOLD', r: [772, 794], f: 800 },
  ], end: 817,
};
const T2 = {
  ox: 680, oy: 315, x: [823, 907, 997, 1072, 1147, 1205, 1274, 1343], title: 'WINDOW SCHEDULE', t: [31, 62], h: [68, 89],
  heads: ['TYPE MARK', 'LEVEL', 'WIDTH', 'HEIGHT', 'COUNT', 'AREA (ft)', 'AREA (m)'],
  groups: [
    { h: 112, n: 'EXTERIOR', r: [126, 146, 165, 184, 203, 221], f: 226 },
    { h: 247, n: 'PATIO DOOR', r: [259, 278, 296], f: 305 },
    { h: 322, n: 'SLIDE DOOR', r: [335, 353, 372, 392, 411, 429, 447, 466, 485], f: 493 },
    { h: 513, n: 'SINGLE DOOR', r: [526, 545, 564, 583, 602, 620, 639, 658, 677], f: 686 },
    { h: 703, n: 'BIFOLD', r: [716, 735, 753], f: 762 },
    { h: 781, n: 'BIFOLD', r: [793, 811], f: 818 },
  ], end: 838,
};
const Schedule = ({ d }) => {
  const X = v => d.ox + v / 3;
  const Y = v => d.oy + v / 3;
  const x0 = d.x[0];
  const xN = d.x[d.x.length - 1];
  return (
    <g>
      <rect x={X(x0)} y={Y(d.t[0])} width={(xN - x0) / 3} height={(d.t[1] - d.t[0]) / 3} fill="#fff" stroke="#000" />
      <Tiny x={(X(x0) + X(xN)) / 2} y={Y(49)} $s={4.800} $b $c="#000" textAnchor="middle">{d.title}</Tiny>
      <rect x={X(x0)} y={Y(d.h[0])} width={(xN - x0) / 3} height={(d.h[1] - d.h[0]) / 3} fill="#fff" stroke="#000" />
      {d.x.slice(1, -1).map(v => <Ln key={v} x1={X(v)} y1={Y(d.h[0])} x2={X(v)} y2={Y(d.h[1])} />)}
      {d.heads.map((h, i) => <Tiny key={i} x={(X(d.x[i]) + X(d.x[i + 1])) / 2} y={Y(83)} $s={4} $c="#222" textAnchor="middle">{h}</Tiny>)}
      {d.groups.map((g, gi) => (
        <g key={gi}>
          <Tiny x={X(x0) + .5} y={Y(g.h) + 1.500} $s={3.800} $b $c="#333">{g.n}</Tiny>
          {g.r.map(v => <Ln key={v} x1={X(x0)} y1={Y(v)} x2={X(xN)} y2={Y(v)} />)}
          {d.x.map(v => <Ln key={v} x1={X(v)} y1={Y(g.r[0])} x2={X(v)} y2={Y(g.r[g.r.length - 1])} />)}
          {g.r.slice(0, -1).map((v, ri) => (
            <g key={v}>
              <Tiny x={X(d.x[0]) + 1} y={Y(v) + 4.800} $s={4} $b $c="#111">{`D${ri + 1}`}</Tiny>
              {d.x.slice(1, -1).map((cx, ci) => (
                <Tiny key={cx} x={X(cx) + 1.200} y={Y(v) + 4.800} $s={4} $b $c="#111">{ci === 0 ? g.n : cellsA[ci + 1]}</Tiny>
              ))}
            </g>
          ))}
          <Tiny x={X(x0) + .5} y={Y(g.f) + 1.500} $s={3.800} $b $c="#333">{`${g.n}: ${g.r.length - 1}`}</Tiny>
        </g>
      ))}
      <Tiny x={X(x0) + .5} y={Y(d.end) + 1.500} $s={3.800} $b $c="#333">TOTAL</Tiny>
    </g>
  );
};

const WL = { X: v => 1240 + v / 3, Y: v => 315 + v / 3 };
const LegendText = ({ x, y, children, s = 3.800, c = '#777' }) => <Tiny x={WL.X(x)} y={WL.Y(y) + 1.300} $s={s} $c={c}>{children}</Tiny>;
const wallDefs = [
  { sec: [65, 90, 26, 115], kind: 'stud', tag: [127, 118, 172, 143, 'W-01'], t: [180, 118, '2x4 STUD PARTITION'], ln: [172, 315, 132],
    sub: [[185, 145, '1/2" GYPSUM WALL BOARD'], [185, 161, '3 5/8" @16" O.C. WOOD STUDS'], [185, 178, '1/2" GYPSUM WALL BOARD']] },
  { sec: [52, 255, 38, 115], kind: 'dith', tag: [118, 285, 163, 310, 'W-02'], t: [172, 285, '2x6 STUD PARTITION'], ln: [163, 305, 295],
    sub: [[175, 311, '1/2" GYPSUM WALL BOARD'], [175, 325, '5 1/2" @16" O.C. WOOD STUDS, R-19 BATT INSULATION'], [175, 342, '1/2" GYPSUM WALL BOARD']] },
  { sec: [40, 430, 73, 138], kind: 'half', tag: [118, 437, 162, 462, 'W-03'], t: [185, 438, '8" CONCRETE + INSULATION WALL, 2x4 STUDS'], ln: [162, 443, 451],
    sub: [[172, 463, 'DAMPROOFING LAYER'], [172, 478, '1/2" PARGING'], [172, 493, '8" POURED CONCRETE'], [172, 508, '1" AIR GAP'], [172, 524, '3 5/8" @16" O.C. WOOD STUDS W/ R14 BATT INSULATION'], [172, 540, '6 MIL POLY AIR/VAPOUR BARRIER'], [172, 557, '1/2" GWB FINISH']] },
  { sec: [52, 613, 48, 70], kind: 'plain', tag: [130, 618, 177, 645, 'W-04'], t: [182, 618, '8" CONCRETE, POURED'], ln: [177, 318, 632],
    sub: [[188, 645, '8" POURED CONCRETE']] },
  { sec: [46, 755, 62, 117], kind: 'ext', tag: [118, 764, 163, 791, 'W-05'], t: [168, 762, 'STONE ON 2X6 WOOD STUD'], ln: [163, 426, 776],
    sub: [[172, 788, '3/4" STONE VENEER'], [172, 803, '1" AIR GAP'], [172, 818, 'AIR BARRIER'], [172, 835, '1/2" PLYWOOD'], [172, 853, '5 1/2" @16" O.C. SPF STUDS, R-MIN SPECIFIED R VALUE'], [172, 870, '6 MIL POLY AIR/VAPOUR BARRIER'], [172, 885, '1/2" GYPSUM WALL BOARD']] },
];
const WallSection = ({ d }) => {
  const [sx, sy, sw, sh] = d.sec;
  const x = WL.X(sx), y = WL.Y(sy), w = sw / 3, h = sh / 3;
  if (d.kind === 'stud') return <g><rect x={x} y={y} width={w} height={h} fill="#fff" stroke="#000" strokeWidth="2" /><rect x={x} y={y + h / 2 - 2} width={w} height={4} fill="#000" /></g>;
  if (d.kind === 'plain') return <rect x={x} y={y} width={w} height={h} fill="#fff" stroke="#000" />;
  if (d.kind === 'dith') return <rect x={x} y={y} width={w} height={h} fill="url(#dither)" stroke="#000" />;
  const part = d.kind === 'half' ? .48 : .68;
  return <g><rect x={x} y={y} width={w} height={h} fill="#fff" stroke="#000" /><rect x={x} y={y} width={w * part} height={h} fill="url(#dither)" stroke="#000" /></g>;
};
const WallLegend = () => {
  const { X, Y } = WL;
  return (
    <g>
      <rect x={X(28)} y={Y(25)} width={146} height={297} fill="#fff" stroke="#000" />
      {[60, 88, 228, 382, 412, 586, 700, 728].map(v => <Ln key={v} x1={X(28)} y1={Y(v)} x2={X(466)} y2={Y(v)} />)}
      <Tiny x={X(247)} y={Y(46)} $s={5} $c="#333" textAnchor="middle">WALL LEGEND</Tiny>
      <Tiny x={X(247)} y={Y(78)} $s={4} $c="#555" textAnchor="middle">INTERIOR WALL</Tiny>
      <Tiny x={X(247)} y={Y(400)} $s={4} $c="#555" textAnchor="middle">FOUNDATION WALL</Tiny>
      <Tiny x={X(247)} y={Y(719)} $s={5} $c="#333" textAnchor="middle">EXTERIOR WALLS</Tiny>
      {wallDefs.map(d => (
        <g key={d.tag[4]}>
          <WallSection d={d} />
          <rect x={X(d.tag[0])} y={Y(d.tag[1])} width={(d.tag[2] - d.tag[0]) / 3} height={(d.tag[3] - d.tag[1]) / 3} fill="#fff" stroke="#000" />
          <Tiny x={(X(d.tag[0]) + X(d.tag[2])) / 2} y={(Y(d.tag[1]) + Y(d.tag[3])) / 2 + 1.300} $s={3.600} $c="#666" textAnchor="middle">{d.tag[4]}</Tiny>
          <LegendText x={d.t[0]} y={d.t[1]} s={4} c="#555">{d.t[2]}</LegendText>
          <Ln x1={X(d.ln[0])} y1={Y(d.ln[2])} x2={X(d.ln[1])} y2={Y(d.ln[2])} />
          {d.sub.map(([a, b, t]) => <LegendText key={b} x={a} y={b}>{t}</LegendText>)}
        </g>
      ))}
    </g>
  );
};

const SymbolLegend = () => {
  const X = v => 1240 + v / 3;
  const Y = v => 670 + v / 3;
  const ys = [62, 96, 130, 202, 236, 270, 304, 338, 372, 406];
  const labels = [[84, 'AIR RETURN'], [118, 'EXHAUST FAN/SIDEWALL/DUCT'], [168, 'HEAT/REGISTER'], [222, 'LIGHT FIXTURE'], [256, 'SINGLE SWITCH'], [288, 'SMOKE ALARM'], [324, 'CARBON MONOXIDE ALARM'], [358, 'WATER METER'], [390, 'EXISTING'], [426, 'PROPOSED']];
  const sy = [['WM', 358], ['EXG.', 390], ['PROP.', 426]];
  return (
    <g>
      <rect x={X(34)} y={Y(31)} width={107} height={137} fill="#fff" stroke="#000" />
      {ys.map(v => <Ln key={v} x1={X(34)} y1={Y(v)} x2={X(353)} y2={Y(v)} />)}
      <Ln x1={X(34)} y1={Y(168)} x2={X(103)} y2={Y(168)} />
      <Ln x1={X(103)} y1={Y(62)} x2={X(103)} y2={Y(442)} />
      <Tiny x={X(198)} y={Y(48)} $s={4.800} $c="#444" textAnchor="middle">SYMBOL LEGEND</Tiny>
      {labels.map(([y, t]) => <Tiny key={y} x={X(114)} y={Y(y)} $s={3.800} $c="#888">{t}</Tiny>)}
      {sy.map(([t, y]) => <Tiny key={y} x={X(68)} y={Y(y)} $s={3.800} $c="#777" textAnchor="middle">{t}</Tiny>)}
      <g transform="translate(1240 670) scale(.3333)" stroke="#000" strokeWidth="3" fill="none">
        <path d="M55 72h22v16H55zM55 72l22 16M55 88l22-16" />
        <path d="M79 69v22" strokeWidth="5" />
        <rect x="48" y="108" width="16" height="14" fill="#000" stroke="none" />
        <path d="M66 115h4M72 106h12v16H72M72 114h12" />
        <rect x="60" y="147" width="18" height="6" fill="#000" stroke="none" />
        <path d="M50 152l6-3M88 152l-6-3" />
        <rect x="55" y="175" width="14" height="14" fill="#000" stroke="none" />
        <path d="M73 172v26" strokeWidth="5" />
        <path d="M58 219h20M67 212v14" strokeWidth="4" />
        <path d="M67 248v12" strokeWidth="4" />
        <circle cx="66" cy="293" r="5" fill="#000" stroke="none" />
        <circle cx="66" cy="321" r="5" fill="#000" stroke="none" />
        <path d="M76 288h4M76 315h12" stroke="#666" strokeWidth="2" />
      </g>
    </g>
  );
};

const TitleBlock = () => {
  const X = v => 1530 + v / 3;
  const Y = v => 560 + v / 3;
  const Lbl = ({ x, y, children, s = 3.800, c = '#777', a }) => <Tiny x={X(x)} y={Y(y)} $s={s} $c={c} textAnchor={a}>{children}</Tiny>;
  return (
    <g>
      {[43, 55, 65, 74, 87, 125, 155, 433, 865, 1010].map(v => <Ln key={v} x1={X(37)} y1={Y(v)} x2={X(316)} y2={Y(v)} />)}
      {[70, 140, 253].map(v => <Ln key={v} x1={X(v)} y1={Y(43)} x2={X(v)} y2={Y(125)} />)}
      <Lbl x={41} y={118}>No.</Lbl><Lbl x={80} y={118}>DATE</Lbl><Lbl x={155} y={118} s={4}>ISSUED FOR</Lbl><Lbl x={260} y={118}>APVD</Lbl>
      <Lbl x={170} y={144} a="middle">REVISIONS</Lbl>
      <Lbl x={41} y={450}>ENGINEER:</Lbl>
      <Lbl x={41} y={695}>CLIENT:</Lbl>
      <Ln x1={X(95)} y1={Y(682)} x2={X(316)} y2={Y(682)} />
      <Lbl x={41} y={882}>PROJECT NAME:</Lbl>
      <Lbl x={172} y={932} s={6.600} c="#444" a="middle">NEW CONSTRUCTION</Lbl>
      <Lbl x={41} y={985}>PROJECT ADDRESS:</Lbl>
      <Lbl x={41} y={1026}>SHEET NAME:</Lbl>
      <Lbl x={175} y={1060} s={6.600} c="#444" a="middle">SCHEDULE &amp; LEGEND</Lbl>
      <Ln x1={X(37)} y1={Y(1075)} x2={X(316)} y2={Y(1075)} />
      <Ln x1={X(186)} y1={Y(1075)} x2={X(186)} y2={Y(1172)} />
      {[1095, 1118, 1142].map(v => <Ln key={v} x1={X(37)} y1={Y(v)} x2={X(186)} y2={Y(v)} />)}
      <Ln x1={X(186)} y1={Y(1118)} x2={X(316)} y2={Y(1118)} />
      <Lbl x={41} y={1090}>DATE: 2021/05/00</Lbl><Lbl x={41} y={1112}>SCALE: 3/4" = 1'-0"</Lbl><Lbl x={41} y={1136}>DRAWN BY:</Lbl><Lbl x={41} y={1163}>CHECKED BY: Checker</Lbl>
      <Lbl x={192} y={1090}>PROJECT No.:</Lbl><Lbl x={310} y={1110} a="end">VOL.06</Lbl><Lbl x={192} y={1134}>SHEET No.:</Lbl>
      <Lbl x={245} y={1158} s={6.500} c="#444" a="middle">A3-11</Lbl>
    </g>
  );
};

const Sheet = () => (
  <SheetSvg viewBox="0 0 1609 805" preserveAspectRatio="xMinYMin meet">
    <defs>
      <pattern id="dither" width="5" height="5" patternUnits="userSpaceOnUse">
        <rect width="5" height="5" fill="#000" />
        <rect x="1" y="0" width="1.500" height="1.500" fill="#fff" /><rect x="3" y="2" width="2" height="1.500" fill="#fff" /><rect x="0" y="3" width="1.500" height="1.500" fill="#fff" />
      </pattern>
    </defs>
    <g transform="translate(-295 -193)">
      <rect x="553.500" y="231.500" width="1092" height="729" fill="#fff" stroke="#000" />
      <rect x="562.500" y="239.500" width="1073" height="711.500" rx="15" fill="#fff" stroke="#000" />
      <Ln x1={1542.500} y1={239.500} x2={1542.500} y2={951} />
      <Schedule d={T1} />
      <Schedule d={T2} />
      <WallLegend />
      <SymbolLegend />
      <TitleBlock />
    </g>
  </SheetSvg>
);

/* ---------- status bar ---------- */
const Status = styled.footer`
  flex: none; height: 22px; background: #c9c9c9; display: flex; align-items: center; position: relative;
`;
const Ready = styled.span`flex: none; width: 40px; padding: 2px 0 0 2px; line-height: 22px;`;
const StatusBox = styled.div`
  height: 18px; margin-top: 4px; width: 100%; background: #fff; display: flex; align-items: center; justify-content: space-between; padding: 0 4px 2px 2px; color: #999;
`;
const si = {
  work: <S s={18}><circle cx="10" cy="3" r="2" fill="#4caf50" /><rect x="8" y="5.500" width="4" height="9" rx="1" fill="#e8e8e8" stroke="#2a6aa5" /><rect x="3" y="8" width="4" height="7" rx="1" fill="#e8e8e8" stroke="#2a6aa5" /></S>,
  flag: <S s={18}><path d="M4 2h7l-2 5 2 7H7L5.500 8z" fill="#bbb" stroke="#999" /></S>,
  list: <S s={18}><rect x="2.500" y="1.500" width="11" height="13" fill="#f2f2f2" stroke="#333" /><path d="M2.500 4h11M4.500 7h1M7 7h5M4.500 9.500h1M7 9.500h5M4.500 12h1M7 12h5" stroke="#333" /></S>,
  mm: <S s={18}><rect x="2" y="1.500" width="11" height="13" fill="#aaa" /><path d="M5 8h6M8 5l3 3-3 3" stroke="#eee" /></S>,
  s1: <S s={17}><path d="M2 3h9v5H2z" fill="#e7c24a" stroke="#8a6a10" /><path d="M8 7v8l2-2 2 3 1-1-2-3h3z" fill="#fff" stroke="#333" strokeWidth=".8" /></S>,
  s2: <S s={17}><path d="M2 14L8 3l5 11z" fill="#e7eef5" stroke="#3a78b0" /><path d="M10 1l4 4M14 1l-4 4" stroke="#d02424" strokeWidth="1.300" /></S>,
  s3: <S s={17}><rect x="3" y="2" width="7" height="5" fill="#e0b88a" stroke="#7a5a30" /><path d="M6 7v7M9 9v6l2-1.500 2 2" stroke="#333" /></S>,
  s4: <S s={17}><rect x="3" y="4" width="5" height="10" fill="#e7eef5" stroke="#3a78b0" /><path d="M9 1l4 4M13 1L9 5" stroke="#d02424" strokeWidth="1.300" /><path d="M9 8v7l2-1.500" stroke="#333" /></S>,
  s5: <S s={17}><path d="M6 1v8M2 5h8" stroke="#222" /><path d="M8 6v9l2-2 2 3 1-1-2-3h3z" fill="#fff" stroke="#333" strokeWidth=".8" /></S>,
  s6: <S s={17}><path d="M8 2l5 3v6l-5 3-5-3V5z" fill="none" stroke="#bbb" strokeWidth="1.600" /></S>,
  s7: <S s={17}><path d="M1.500 2h13L10 8v6.500L6 12V8z" fill="#dfe3e7" stroke="#777" /></S>,
};
const Zero = styled.span`color: #333; font-size: 11px;`;
const Hair = styled.span`color: #aaa; font-size: 10px;`;
const statusItems = [
  { c: 903, n: si.work },
  { c: 1022.500, w: 205, n: <StatusBox><span /><Chev d="down" c="#bbb" /></StatusBox> },
  { c: 1141, n: si.flag }, { c: 1158, w: 12, n: <Zero>:0</Zero> }, { c: 1195, n: si.list }, { c: 1221, n: si.mm },
  { c: 1340, w: 204, n: <StatusBox>Main Model<Chev d="down" c="#bbb" /></StatusBox> },
  { c: 1680, n: si.s1 }, { c: 1706, n: si.s2 }, { c: 1732, n: si.s3 }, { c: 1758, n: si.s4 }, { c: 1783, n: si.s5 },
  { c: 1810, n: si.s6 }, { c: 1833, n: si.s7 }, { c: 1850, w: 12, n: <Zero>:0</Zero> },
];

export default function App() {
  const tabs = ['Architecture', 'Structure', 'Steel', 'Systems', 'Insert', 'Annotate', 'Analyze', 'Massing & Site', 'Collaborate', 'View', 'Manage', 'Add-Ins', 'Enscape™', 'pyRevit', 'Modify'];
  const widths = [83, 68, 45, 63, 49, 69, 61, 99, 81, 45, 63, 62, 74, 58, 58];
  return (
    <Page>
      <Global />
      <TopBar>
        <TitleRow>
          <Placed items={qatLeft} />
          <Title>Autodesk Revit 2020 - Residential-Building-vol-06 - Sheet: A3-11 - SCHEDULE &amp; LEGEND</Title>
          <Placed items={qatRight} start={1560} />
        </TitleRow>
        <TabsRow>
          <FileTab>File</FileTab>
          {tabs.map((t, i) => <RibbonTab key={t} $w={widths[i]} $on={i === 0}>{t}</RibbonTab>)}
          <RibbonTab $w={50}>
            <svg width="14" height="10" viewBox="0 0 14 10" fill="none"><rect x=".5" y=".5" width="13" height="9" rx="3" stroke="#333" /><path d="M4 6.500h6L7 3z" fill="#333" /></svg>
            <RibbonMenuCaret />
          </RibbonTab>
        </TabsRow>
      </TopBar>
      <RibbonBar />
      <OptionsBar />
      <Main>
        <Left>
          <Properties />
          <Browser />
        </Left>
        <ViewSide>
          <TabStrip>
            {viewTabs.map(([t, w, kind]) => (
              <ViewTab key={t} $w={w}>{kind ? <CubeTab /> : <SheetGlyph />}{t}</ViewTab>
            ))}
            <ViewTab $w={219} $on><SheetGlyph c="#444" />A3-11 - SCHEDULE &amp; LEGEND<TabClose><CloseX /></TabClose></ViewTab>
            <TabMenu>{qa.menu}</TabMenu>
          </TabStrip>
          <CanvasRow>
            <Canvas>
              <Sheet />
              <NavBar>
                <NavDot />
                <svg width="28" height="24" viewBox="0 0 28 24" fill="none">
                  <path d="M3 12C3 5 8 2 15 2c5 0 6 3 6 7 0 6-3 12-10 12C6 21 3 17 3 12z" fill="#e9e9e9" stroke="#aaa" strokeWidth="1.500" />
                  <circle cx="11" cy="12" r="4.500" fill="#f5f5f5" stroke="#aaa" />
                </svg>
                <Nav2D>2D</Nav2D>
                <NavCaret $c="#888" $mt={5} />
                <NavRule />
                <svg width="22" height="22" viewBox="0 0 22 22" fill="none">
                  <path d="M3 3l4 4M3 3h3M3 3v3M17 3l-4 4M17 3h-3M17 3v3M3 17l4-4M3 17h3M3 17v-3" stroke="#bbb" />
                  <circle cx="13" cy="13" r="4" stroke="#aaa" strokeWidth="1.500" /><path d="M16 16l4 4" stroke="#888" strokeWidth="2" />
                </svg>
                <NavCaret $c="#888" $mt={9} />
                <NavDotBottom />
              </NavBar>
            </Canvas>
            <SideBar>
              <ArrowBtn><Chev c="#333" /></ArrowBtn>
              <SideTrack><SideThumb /></SideTrack>
              <ArrowBtn><Chev d="down" c="#333" /></ArrowBtn>
            </SideBar>
          </CanvasRow>
          <BottomBar>
            <Placed start={295} items={[
              { c: 306, n: <S s={14}><path d="M2 9l5-5 5 5-5 4z" fill="#fff" stroke="#555" /><circle cx="11" cy="4" r="2" stroke="#3a78b0" /></S> },
              { c: 327, n: <S s={12}><circle cx="8" cy="6" r="3.500" fill="#eee" stroke="#3a78b0" /><path d="M8 10v4" stroke="#3a78b0" /></S> },
              { c: 348, w: 10, n: <Chev d="left" c="#333" /> },
              { c: 1122.500, w: 19, n: <BottomThumb /> },
              { c: 1900, w: 10, n: <Chev d="right" c="#333" /> },
              { c: 1914, w: 8, n: <Hair>⋰</Hair> },
            ]} />
          </BottomBar>
        </ViewSide>
      </Main>
      <Status>
        <Ready>Ready</Ready>
        <Placed items={statusItems} start={40} />
      </Status>
    </Page>
  );
}
